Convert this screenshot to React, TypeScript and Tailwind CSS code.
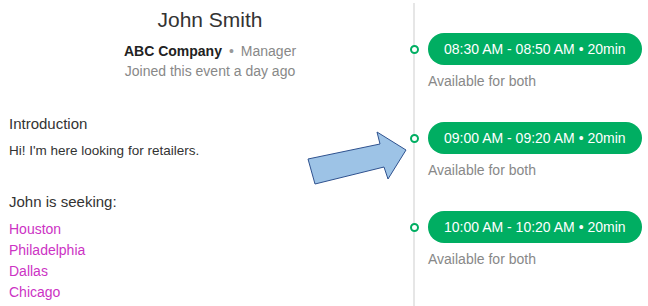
const slots = [
  "08:30 AM - 08:50 AM • 20min",
  "09:00 AM - 09:20 AM • 20min",
  "10:00 AM - 10:20 AM • 20min",
];

const cities = ["Houston", "Philadelphia", "Dallas", "Chicago"];

export default function App() {
  return (
    <div className="relative h-[306px] w-[648px] overflow-hidden bg-white font-['Liberation_Sans',Arial,sans-serif]">
      <div className="flex">
        {/* profile column */}
        <div className="w-[413px] shrink-0">
          <div className="flex flex-col items-center pl-[7px] pt-[6px]">
            <h1 className="text-[21px] leading-[28px] text-[#333]">John Smith</h1>
            <div className="mt-[7px] text-[14px] leading-[20px]">
              <span className="font-bold text-[#222]">ABC Company</span>
              <span className="mx-[7px] text-[#999]">•</span>
              <span className="text-[#888]">Manager</span>
            </div>
            <div className="text-[14px] leading-[20px] text-[#888]">
              Joined this event a day ago
            </div>
          </div>

          <div className="pl-[9px]">
            <div className="mt-[33px] text-[15px] leading-[20px] text-[#333]">Introduction</div>
            <p className="mt-[7px] text-[13.5px] leading-[20px] text-[#333]">
              Hi! I'm here looking for retailers.
            </p>
            <div className="mt-[31px] text-[15px] leading-[20px] text-[#333]">
              John is seeking:
            </div>
            <ul className="mt-[7px]">
              {cities.map((city) => (
                <li key={city} className="text-[14px] leading-[21px] text-[#cc33c4]">
                  {city}
                </li>
              ))}
            </ul>
          </div>
        </div>

        {/* timeline */}
        <div className="mt-[3px] min-h-[303px] flex-1 border-l-2 border-[#e6e6e6] pl-[13px] pt-[30px]">
          <div className="flex flex-col gap-[31px]">
            {slots.map((slot) => (
              <div key={slot} className="relative">
                <span className="absolute left-[-18px] top-[12px] h-[9px] w-[9px] rounded-full border-2 border-[#00ae62] bg-white" />
                <div className="inline-flex h-[32px] items-center rounded-full bg-[#00ae62] px-4 text-[14px] text-white">
                  {slot}
                </div>
                <div className="mt-[6px] text-[14px] leading-[20px] text-[#888]">
                  Available for both
                </div>
              </div>
            ))}
          </div>
        </div>
      </div>

      {/* callout arrow */}
      <svg
        className="pointer-events-none absolute left-0 top-0"
        width="648"
        height="306"
        viewBox="0 0 648 306"
        aria-hidden="true"
      >
        <polygon
          points="308,159 380,144 377,132 406,150 388,179 384,167 315,184"
          fill="#9dc3e6"
          stroke="#2f528f"
          strokeWidth="1"
          strokeLinejoin="miter"
        />
      </svg>
    </div>
  );
}
